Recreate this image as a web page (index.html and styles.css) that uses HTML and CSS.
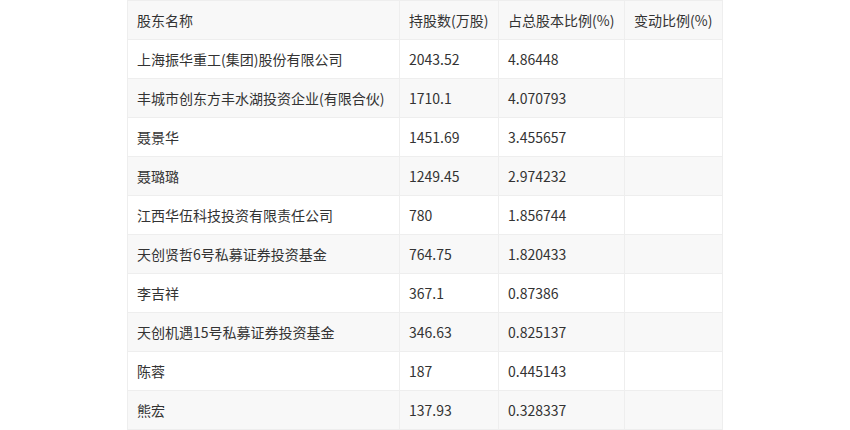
FILE: index.html
```html
<!DOCTYPE html>
<html lang="zh">
<head>
<meta charset="utf-8">
<link rel="stylesheet" href="styles.css">
</head>
<body>
<div class="wrap">
<table class="holders">
<colgroup>
<col class="c1"><col class="c2"><col class="c3"><col class="c4">
</colgroup>
<thead>
<tr><th>股东名称</th><th>持股数(万股)</th><th>占总股本比例(%)</th><th>变动比例(%)</th></tr>
</thead>
<tbody>
<tr><td>上海振华重工(集团)股份有限公司</td><td>2043.52</td><td>4.86448</td><td></td></tr>
<tr><td>丰城市创东方丰水湖投资企业(有限合伙)</td><td>1710.1</td><td>4.070793</td><td></td></tr>
<tr><td>聂景华</td><td>1451.69</td><td>3.455657</td><td></td></tr>
<tr><td>聂璐璐</td><td>1249.45</td><td>2.974232</td><td></td></tr>
<tr><td>江西华伍科技投资有限责任公司</td><td>780</td><td>1.856744</td><td></td></tr>
<tr><td>天创贤哲6号私募证券投资基金</td><td>764.75</td><td>1.820433</td><td></td></tr>
<tr><td>李吉祥</td><td>367.1</td><td>0.87386</td><td></td></tr>
<tr><td>天创机遇15号私募证券投资基金</td><td>346.63</td><td>0.825137</td><td></td></tr>
<tr><td>陈蓉</td><td>187</td><td>0.445143</td><td></td></tr>
<tr><td>熊宏</td><td>137.93</td><td>0.328337</td><td></td></tr>
</tbody>
</table>
</div>
</body>
</html>
```

FILE: styles.css
```css
html, body {
  margin: 0;
  padding: 0;
  background: #ffffff;
}
.wrap {
  padding-left: 127px;
}
.holders {
  border-collapse: collapse;
  table-layout: fixed;
  width: 595px;
  font-family: "Microsoft YaHei", "Noto Sans CJK SC", "Noto Sans", sans-serif;
  font-size: 14px;
  color: #333333;
}
.c1 { width: 272px; }
.c2 { width: 99px; }
.c3 { width: 126px; }
.c4 { width: 98px; }
.holders th,
.holders td {
  border: 1px solid #eeeeee;
  height: 39px;
  padding: 0 0 0 9px;
  text-align: left;
  font-weight: normal;
  white-space: nowrap;
  box-sizing: border-box;
}
.holders thead tr {
  background: #f8f8f8;
}
.holders tbody tr:nth-child(even) {
  background: #f8f8f8;
}
.holders tbody tr:nth-child(odd) {
  background: #ffffff;
}
```
